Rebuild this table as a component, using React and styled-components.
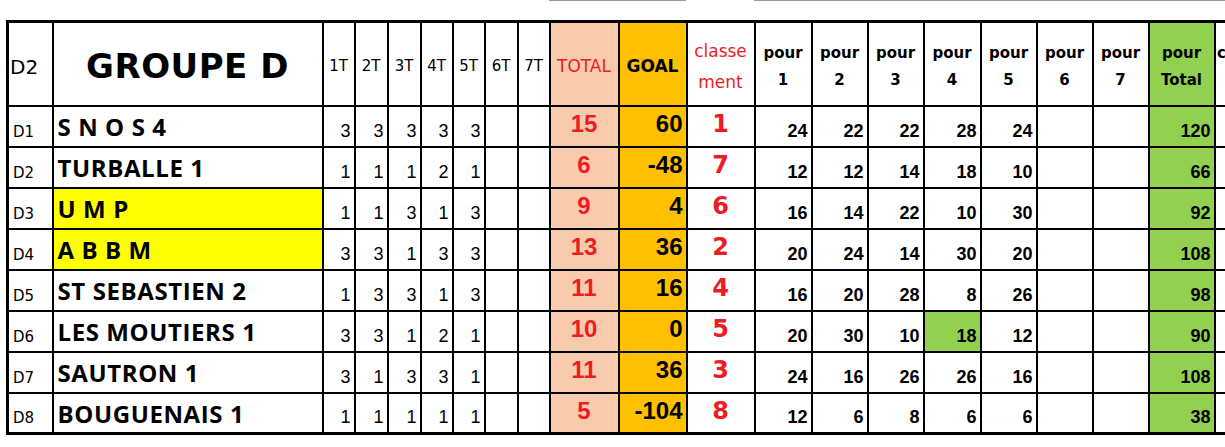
import React from 'react';
import styled, { createGlobalStyle } from 'styled-components';

const GlobalStyle = createGlobalStyle`
  html, body {
    margin: 0;
    padding: 0;
    background: #fff;
  }
`;

const COMIC = `"DejaVu Sans", sans-serif`;
const CALIBRI = `"Open Sans", "Noto Sans", sans-serif`;
const ARIAL = `"Liberation Sans", Arial, sans-serif`;

const RED = '#ee1c25';
const PEACH = '#f8cbad';
const GOLD = '#ffc000';
const GREEN = '#92d050';
const YELLOW = '#ffff00';

// column widths, measured between grid lines
const widths = [45, 270, 32, 33, 33, 32, 32, 33, 32, 69, 68, 68, 57, 56, 56, 57, 56, 56, 56, 66, 60];

const Page = styled.div`
  width: 1225px;
  height: 447px;
  overflow: hidden;
  padding-left: 6px;
  box-sizing: border-box;
`;

const PrevStrip = styled.table`
  border-collapse: collapse;
  table-layout: fixed;
  width: ${widths.reduce((a, b) => a + b, 0)}px;
  margin-bottom: 19px;
`;

const PrevCell = styled.td`
  height: 0;
  padding: 0;
  border-bottom: ${p => (p.$on ? '1px solid #9a9a9a' : '1px solid transparent')};
  border-left: ${p => (p.$on ? '1px solid #9a9a9a' : '1px solid transparent')};
`;

const Sheet = styled.table`
  border-collapse: collapse;
  table-layout: fixed;
  width: ${widths.reduce((a, b) => a + b, 0)}px;
  border: 3px solid #000;
`;

const HeadRow = styled.tr`
  height: 84px;
`;

const Row = styled.tr`
  height: 41px;
`;

const HeadCell = styled.th`
  border: 2px solid #000;
  padding: 6px 1px 0;
  font-family: ${COMIC};
  font-weight: ${p => (p.$bold ? 700 : 400)};
  font-size: ${p => p.$size || 15}px;
  color: ${p => p.$color || '#000'};
  background: ${p => p.$bg || '#fff'};
  text-align: ${p => p.$align || 'center'};
  vertical-align: middle;
  line-height: 1.8;
  white-space: nowrap;
  overflow: hidden;
`;

const Title = styled.span`
  font-family: ${COMIC};
  font-size: 34px;
  font-weight: 700;
  letter-spacing: 0.5px;
`;

const Cell = styled.td`
  border: 2px solid #000;
  padding: ${p => (p.$align === 'left' ? '3px 4px 0' : '0 3px 4px 3px')};
  font-family: ${p => p.$font || ARIAL};
  font-weight: ${p => p.$weight || 400};
  font-size: ${p => p.$size || 18}px;
  letter-spacing: ${p => p.$spacing || 0}px;
  color: ${p => p.$color || '#000'};
  background: ${p => p.$bg || '#fff'};
  text-align: ${p => p.$align || 'right'};
  vertical-align: ${p => p.$valign || 'bottom'};
  white-space: nowrap;
  overflow: hidden;
  line-height: 1.1;
`;

const Code = styled.td`
  border: 2px solid #000;
  padding: 0 0 6px 4px;
  font-family: ${COMIC};
  font-size: 15px;
  vertical-align: bottom;
  text-align: left;
  line-height: 1;
`;

const rows = [
  { code: 'D1', name: 'S N O S 4', rounds: [3, 3, 3, 3, 3], total: 15, goal: 60, rank: 1, pour: [24, 22, 22, 28, 24], pt: 120 },
  { code: 'D2', name: 'TURBALLE 1', rounds: [1, 1, 1, 2, 1], total: 6, goal: -48, rank: 7, pour: [12, 12, 14, 18, 10], pt: 66 },
  { code: 'D3', name: 'U M P', rounds: [1, 1, 3, 1, 3], total: 9, goal: 4, rank: 6, pour: [16, 14, 22, 10, 30], pt: 92, highlight: true },
  { code: 'D4', name: 'A B B M', rounds: [3, 3, 1, 3, 3], total: 13, goal: 36, rank: 2, pour: [20, 24, 14, 30, 20], pt: 108, highlight: true },
  { code: 'D5', name: 'ST SEBASTIEN 2', rounds: [1, 3, 3, 1, 3], total: 11, goal: 16, rank: 4, pour: [16, 20, 28, 8, 26], pt: 98 },
  { code: 'D6', name: 'LES MOUTIERS 1', rounds: [3, 3, 1, 2, 1], total: 10, goal: 0, rank: 5, pour: [20, 30, 10, 18, 12], pt: 90, greenPour: 3 },
  { code: 'D7', name: 'SAUTRON 1', rounds: [3, 1, 3, 3, 1], total: 11, goal: 36, rank: 3, pour: [24, 16, 26, 26, 16], pt: 108 },
  { code: 'D8', name: 'BOUGUENAIS 1', rounds: [1, 1, 1, 1, 1], total: 5, goal: -104, rank: 8, pour: [12, 6, 8, 6, 6], pt: 38 },
];

const Cols = () => (
  <colgroup>
    {widths.map((w, i) => <col key={i} style={{ width: w }} />)}
  </colgroup>
);

export default function App() {
  return (
    <Page>
      <GlobalStyle />
      <PrevStrip>
        <Cols />
        <tbody>
          <tr>
            {widths.map((w, i) => (
              <PrevCell key={i} $on={i === 9 || i === 10 || i >= 12} />
            ))}
          </tr>
        </tbody>
      </PrevStrip>
      <Sheet>
        <Cols />
        <thead>
          <HeadRow>
            <HeadCell $align="left" $size={20}>D2</HeadCell>
            <HeadCell><Title>GROUPE D</Title></HeadCell>
            {[1, 2, 3, 4, 5, 6, 7].map(n => (
              <HeadCell key={n} $size={15}>{n}T</HeadCell>
            ))}
            <HeadCell $bg={PEACH} $color={RED} $size={17}>TOTAL</HeadCell>
            <HeadCell $bg={GOLD} $size={17} $bold>GOAL</HeadCell>
            <HeadCell $color={RED} $size={17}>classe<br />ment</HeadCell>
            {[1, 2, 3, 4, 5, 6, 7].map(n => (
              <HeadCell key={n} $size={15} $bold>pour<br />{n}</HeadCell>
            ))}
            <HeadCell $bg={GREEN} $size={15} $bold>pour<br />Total</HeadCell>
            <HeadCell $size={15} $bold>contre<br />1</HeadCell>
          </HeadRow>
        </thead>
        <tbody>
          {rows.map(r => (
            <Row key={r.code}>
              <Code>{r.code}</Code>
              <Cell $align="left" $valign="middle" $font={CALIBRI} $weight={700} $size={24} $spacing={0.6}
                $bg={r.highlight ? YELLOW : '#fff'}>
                {r.name}
              </Cell>
              {[0, 1, 2, 3, 4, 5, 6].map(i => (
                <Cell key={i}>{r.rounds[i] ?? ''}</Cell>
              ))}
              <Cell $bg={PEACH} $color={RED} $weight={700} $size={24} $align="center" $valign="middle">{r.total}</Cell>
              <Cell $bg={GOLD} $weight={700} $size={24} $valign="middle">{r.goal}</Cell>
              <Cell $font={COMIC} $color={RED} $weight={700} $size={24} $align="center" $valign="middle">{r.rank}</Cell>
              {[0, 1, 2, 3, 4, 5, 6].map(i => (
                <Cell key={i} $weight={700} $size={18} $bg={r.greenPour === i ? GREEN : '#fff'}>
                  {r.pour[i] ?? ''}
                </Cell>
              ))}
              <Cell $bg={GREEN} $weight={700} $size={18}>{r.pt}</Cell>
              <Cell />
            </Row>
          ))}
        </tbody>
      </Sheet>
    </Page>
  );
}
